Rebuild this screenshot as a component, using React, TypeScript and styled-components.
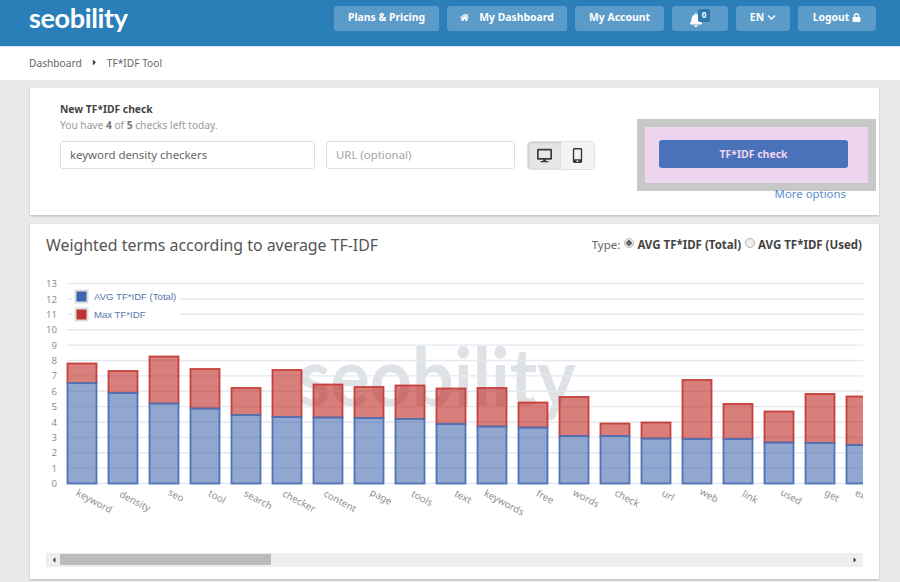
import React from "react";
import styled, { createGlobalStyle } from "styled-components";
import { FaHome, FaBell, FaChevronDown, FaLock, FaDesktop, FaMobileAlt, FaCaretRight, FaCaretLeft } from "react-icons/fa";

const Global = createGlobalStyle`
  html, body { margin: 0; padding: 0; height: 582px; overflow: hidden; background: #e9e9e9; }
  #root { height: 582px; overflow: hidden; }
  * { box-sizing: border-box; }
  body { font-family: "Noto Sans", "Open Sans", "Liberation Sans", sans-serif; color: #555; }
`;

const Header = styled.header`
  height: 47px; background: #2b7fb8; border-bottom: 1px solid #d3e7f3;
  display: flex; justify-content: space-between; align-items: flex-start;
  padding: 6px 24px 0 29px;
`;
const Logo = styled.div`
  font-family: Lato, "Open Sans", sans-serif; font-weight: 700; font-size: 27px; line-height: 27px;
  color: #fff; letter-spacing: -0.35px; margin-top: -2px;
`;
const Nav = styled.nav`display: flex; gap: 8px;`;
const NavButton = styled.a<{ $w: number }>`
  position: relative; width: ${p => p.$w}px; height: 25px; border-radius: 3px; background: #5a9bc9;
  display: flex; align-items: center; justify-content: center; gap: 3px; padding-bottom: 3px;
  color: #fff; font-size: 10.4px; font-weight: 700;
  svg { font-size: 9px; }
`;
const HomeGlyph = styled(FaHome)`margin-right: 7px;`;
const BellGlyph = styled(FaBell)`&& { font-size: 14px; margin: 6px 8px 0 0; }`;
const Badge = styled.span`
  position: absolute; left: 26px; top: 3px; min-width: 12px; height: 13px; background: #2f78ad; border-radius: 2px;
  font-size: 8px; line-height: 12px; text-align: center; color: #fff;
`;
const Crumbs = styled.div`
  height: 33px; background: #fff; display: flex; align-items: center; padding: 0 0 2px 29px;
  font-size: 10.2px; color: #666; gap: 8px;
  svg { font-size: 9px; color: #444; }
`;
const Main = styled.main`display: flex; flex-direction: column; gap: 9px; padding: 8px 21px 0 30px;`;
const Card = styled.section`background: #fff; box-shadow: 0 1px 2px rgba(0,0,0,.22);`;
const CheckCard = styled(Card)`
  height: 127px; display: flex; justify-content: space-between; padding: 15px 3px 0 30px;
`;
const FormCol = styled.div`display: flex; flex-direction: column;`;
const FormTitle = styled.div`font-size: 10.3px; font-weight: 700; color: #444; line-height: 13px;`;
const FormHint = styled.div`
  font-size: 10.2px; color: #999; line-height: 14px; margin-top: 2px;
  b { color: #777; }
`;
const FormRow = styled.div`display: flex; margin-top: 9px;`;
const Field = styled.div<{ $w: number; $muted?: boolean }>`
  width: ${p => p.$w}px; height: 28px; border: 1px solid #ddd; border-radius: 3px; margin-right: 11px;
  display: flex; align-items: center; padding: 0 0 2px 9px; font-size: 11.4px;
  color: ${p => (p.$muted ? "#a5a5a5" : "#666")};
`;
const Toggle = styled.div`display: flex; height: 29px; border: 1px solid #e2e2e2; border-radius: 4px; overflow: hidden; margin-left: 1px;`;
const ToggleBtn = styled.div<{ $on?: boolean }>`
  width: 33px; display: flex; align-items: center; justify-content: center; font-size: 15px; color: #3a3a3a;
  background: ${p => (p.$on ? "#e6e6e6" : "#f4f4f4")};
  box-shadow: ${p => (p.$on ? "inset 1px 1px 3px rgba(0,0,0,.14)" : "none")};
`;
const ActionCol = styled.div`display: flex; flex-direction: column; align-items: flex-end; margin-top: 16px;`;
const Highlight = styled.div`
  width: 239px; height: 72px; border: 8px solid #c8c8c8; background: #eed5ef; padding: 13px 20px 0 14px;
`;
const CheckButton = styled.div`
  height: 28px; border-radius: 3px; background: #4a72ba; color: #eed5ef; font-size: 10.5px; font-weight: 700;
  display: flex; align-items: center; justify-content: center;
`;
const MoreLink = styled.a`font-size: 11.4px; color: #5b8fc7; line-height: 14px; margin: -4px 30px 0 0;`;
const ChartCard = styled(Card)`height: 355px; padding: 0 16px; display: flex; flex-direction: column;`;
const ChartHead = styled.div`height: 46px; display: flex; justify-content: space-between; align-items: center; padding-bottom: 4px;`;
const ChartTitle = styled.h2`margin: 0; font-size: 15.9px; font-weight: 400; color: #555;`;
const TypeBox = styled.div`display: flex; align-items: center; font-size: 11.5px; color: #666; gap: 3px; margin: -1px 1px 0 0;`;
const Radio = styled.span<{ $on?: boolean }>`
  width: 10px; height: 10px; border-radius: 50%; border: 1px solid #b5b5b5; margin: -3px 0 0 1px;
  background: ${p => (p.$on ? "radial-gradient(circle, #666 0 2.5px, #eee 3px)" : "#eee")};
`;
const RadioLabel = styled.b`color: #444; font-weight: 700;`;
const Plot = styled.svg`display: block; width: 817px; height: 283px; overflow: hidden;`;
const Scroll = styled.div`
  height: 14px; background: #eee; display: flex; align-items: center; padding: 0 4px; color: #444; font-size: 8px;
  justify-content: space-between; position: relative;
`;
const Thumb = styled.div`position: absolute; left: 14px; top: 1px; width: 211px; height: 11px; background: #bbb;`;

const TOP = 270;
const yOf = (v: number) => 483.5 - v * 15.38 - TOP;
const data: [string, number, number][] = [
  ["keyword", 383, 363.5], ["density", 393, 371], ["seo", 403.5, 356.5], ["tool", 408.5, 369],
  ["search", 415, 388], ["checker", 417, 370], ["content", 417.5, 384.5], ["page", 418, 387],
  ["tools", 419, 385.5], ["text", 424, 388.5], ["keywords", 426.5, 388], ["free", 427.5, 402.5],
  ["words", 436, 397], ["check", 436, 423.5], ["url", 438.5, 422.5], ["web", 439, 380],
  ["link", 439, 404], ["used", 442.5, 411.5], ["get", 443, 394], ["example", 445, 396.5],
];

const Chart = () => (
  <Plot viewBox="0 0 817 283">
    <text x={252} y={136} fontFamily="Lato, sans-serif" fontWeight={700} fontSize={80} fill="#dfe2e5" textLength={278} lengthAdjust="spacingAndGlyphs">seobility</text>
    {Array.from({ length: 14 }, (_, i) => (
      <g key={i}>
        <line x1={21} x2={817} y1={yOf(i)} y2={yOf(i)} stroke="#e3e8f1" strokeWidth={1.4} />
        <text x={11} y={yOf(i) + 3.6} textAnchor="end" fontSize={9.6} fill="#888" fontFamily="Open Sans, sans-serif">{i}</text>
      </g>
    ))}
    {data.map(([name, avg, max], i) => {
      const x = 21.5 + i * 41;
      const base = 483.5 - TOP;
      const ly = 224 + name.length * 1.45;
      return (
        <g key={name}>
          <rect x={x} y={max - TOP} width={29} height={avg - max} fill="rgb(190,40,35)" fillOpacity={0.6} stroke="#c8403c" strokeWidth={1.8} />
          <rect x={x} y={avg - TOP} width={29} height={base - avg + TOP} fill="rgb(73,108,175)" fillOpacity={0.6} stroke="#4f73b6" strokeWidth={1.8} />
          <text x={x + 25} y={ly} textAnchor="middle" fontSize={9.8} fill="#909090" fontFamily="Noto Sans, sans-serif" transform={`rotate(28 ${x + 25} ${ly})`}>{name}</text>
        </g>
      );
    })}
    <rect x={26} y={19} width={108} height={34} fill="#fff" />
    <rect x={29.5} y={20.5} width={12} height={12} fill="#3f66ad" stroke="#ddd" strokeWidth={2} />
    <text x={48} y={30} fontSize={9.6} fill="#5a73ab" fontFamily="Liberation Sans, sans-serif">AVG TF*IDF (Total)</text>
    <rect x={29.5} y={38.5} width={12} height={12} fill="#c0342f" stroke="#ddd" strokeWidth={2} />
    <text x={48} y={48} fontSize={9.6} fill="#5a73ab" fontFamily="Liberation Sans, sans-serif">Max TF*IDF</text>
  </Plot>
);

export default function App() {
  return (
    <>
      <Global />
      <Header>
        <Logo>seobility</Logo>
        <Nav>
          <NavButton $w={105}>Plans &amp; Pricing</NavButton>
          <NavButton $w={120}><HomeGlyph />My Dashboard</NavButton>
          <NavButton $w={89}>My Account</NavButton>
          <NavButton $w={56}><BellGlyph /><Badge>0</Badge></NavButton>
          <NavButton $w={54}>EN <FaChevronDown /></NavButton>
          <NavButton $w={78}>Logout <FaLock /></NavButton>
        </Nav>
      </Header>
      <Crumbs>Dashboard <FaCaretRight /> TF*IDF Tool</Crumbs>
      <Main>
        <CheckCard>
          <FormCol>
            <FormTitle>New TF*IDF check</FormTitle>
            <FormHint>You have <b>4</b> of <b>5</b> checks left today.</FormHint>
            <FormRow>
              <Field $w={255}>keyword density checkers</Field>
              <Field $w={189} $muted>URL (optional)</Field>
              <Toggle>
                <ToggleBtn $on><FaDesktop /></ToggleBtn>
                <ToggleBtn><FaMobileAlt /></ToggleBtn>
              </Toggle>
            </FormRow>
          </FormCol>
          <ActionCol>
            <Highlight><CheckButton>TF*IDF check</CheckButton></Highlight>
            <MoreLink>More options</MoreLink>
          </ActionCol>
        </CheckCard>
        <ChartCard>
          <ChartHead>
            <ChartTitle>Weighted terms according to average TF-IDF</ChartTitle>
            <TypeBox>Type: <Radio $on /> <RadioLabel>AVG TF*IDF (Total)</RadioLabel> <Radio /> <RadioLabel>AVG TF*IDF (Used)</RadioLabel></TypeBox>
          </ChartHead>
          <Chart />
          <Scroll><FaCaretLeft /><Thumb /><FaCaretRight /></Scroll>
        </ChartCard>
      </Main>
    </>
  );
}
